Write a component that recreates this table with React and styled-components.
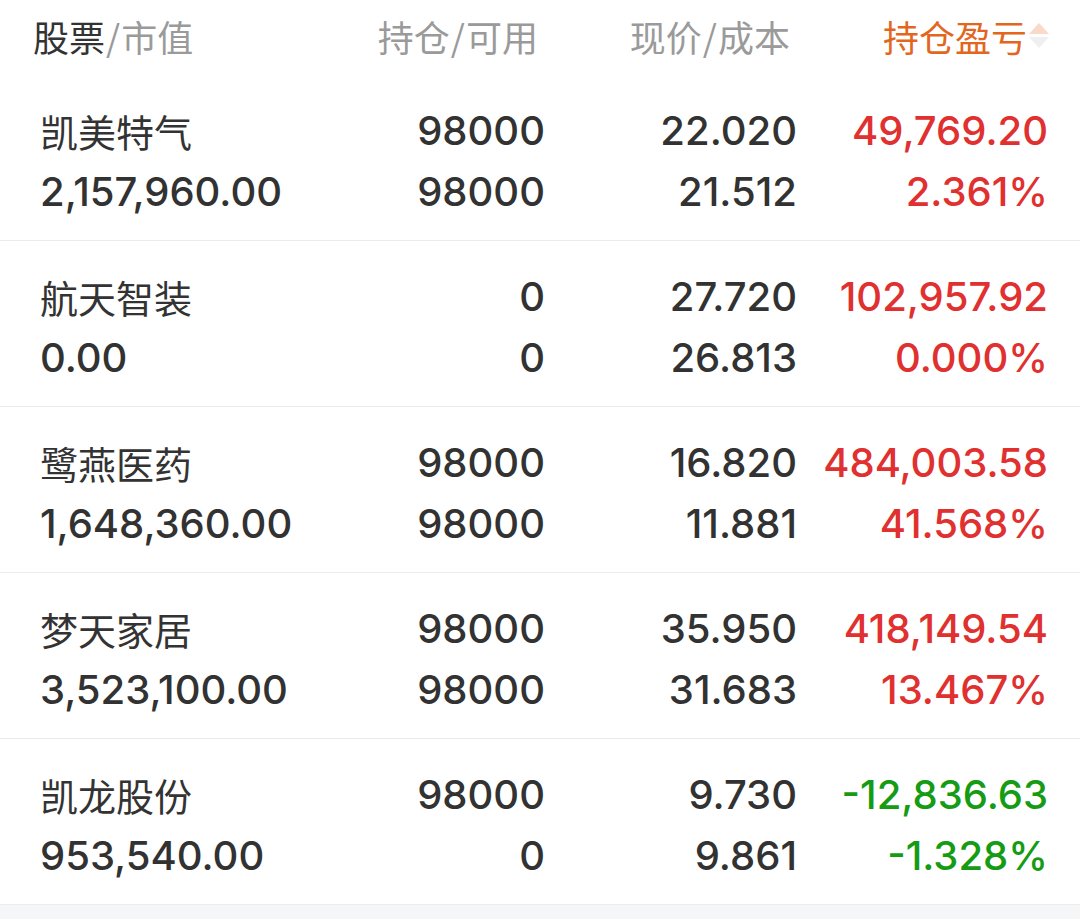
import React from 'react';
import styled, { createGlobalStyle } from 'styled-components';

const GlobalStyle = createGlobalStyle`
  html, body {
    margin: 0;
    padding: 0;
    background: #f5f6f8;
  }
  body {
    font-family: "Noto Sans CJK SC", sans-serif;
  }
`;

const Board = styled.div`
  background: #ffffff;
`;

const Grid = styled.div`
  display: grid;
  grid-template-columns: 260px 245px 252px 251px;
  padding: 0 32px 0 40px;
`;

const Header = styled(Grid)`
  height: 75px;
  box-sizing: border-box;
  padding: 0 28px 4px 33px;
  align-items: center;
  font-family: "Noto Sans CJK SC", sans-serif;
  font-size: 36px;
  line-height: 1;
`;

const HeadCell = styled.div`
  display: flex;
  align-items: center;
  justify-content: ${(p) => (p.$left ? 'flex-start' : 'flex-end')};
  color: #9a9a9a;
`;

const Strong = styled.span`
  color: ${(p) => (p.$active ? '#e2661d' : '#333333')};
`;

const Slash = styled.span`
  margin: 0 1px;
`;

const Sorter = styled.span`
  display: flex;
  flex-direction: column;
  gap: 3px;
  margin-left: 2px;
  margin-right: -8px;
`;

const Tri = styled.span`
  width: 0;
  height: 0;
  border-left: 10px solid transparent;
  border-right: 10px solid transparent;
  ${(p) =>
    p.$up
      ? 'border-bottom: 11px solid #fbd9c8;'
      : 'border-top: 11px solid #efefef;'}
`;

const Row = styled(Grid)`
  padding-top: 25px;
  padding-bottom: 18px;
  border-bottom: 1px solid #ececec;
`;

const Cell = styled.div`
  display: flex;
  flex-direction: column;
  align-items: ${(p) => (p.$left ? 'flex-start' : 'flex-end')};
`;

const Line = styled.div`
  height: 61px;
  line-height: 61px;
  white-space: nowrap;
  font-family: Inter, "Noto Sans CJK SC", sans-serif;
  font-weight: 500;
  font-size: 40px;
  color: ${(p) => p.$color || '#323232'};
`;

const Name = styled(Line)`
  font-family: "Noto Sans CJK SC", sans-serif;
  font-weight: 400;
  font-size: 38px;
  color: #333333;
`;

const RED = '#e0302f';
const GREEN = '#159b14';

const stocks = [
  { name: '凯美特气', value: '2,157,960.00', hold: '98000', avail: '98000', price: '22.020', cost: '21.512', pnl: '49,769.20', pct: '2.361%', up: true },
  { name: '航天智装', value: '0.00', hold: '0', avail: '0', price: '27.720', cost: '26.813', pnl: '102,957.92', pct: '0.000%', up: true },
  { name: '鹭燕医药', value: '1,648,360.00', hold: '98000', avail: '98000', price: '16.820', cost: '11.881', pnl: '484,003.58', pct: '41.568%', up: true },
  { name: '梦天家居', value: '3,523,100.00', hold: '98000', avail: '98000', price: '35.950', cost: '31.683', pnl: '418,149.54', pct: '13.467%', up: true },
  { name: '凯龙股份', value: '953,540.00', hold: '98000', avail: '0', price: '9.730', cost: '9.861', pnl: '-12,836.63', pct: '-1.328%', up: false },
];

export default function App() {
  return (
    <Board>
      <GlobalStyle />
      <Header>
        <HeadCell $left>
          <Strong>股票</Strong>
          <Slash>/</Slash>市值
        </HeadCell>
        <HeadCell>
          持仓<Slash>/</Slash>可用
        </HeadCell>
        <HeadCell>
          现价<Slash>/</Slash>成本
        </HeadCell>
        <HeadCell>
          <Strong $active>持仓盈亏</Strong>
          <Sorter>
            <Tri $up />
            <Tri />
          </Sorter>
        </HeadCell>
      </Header>
      {stocks.map((s) => (
        <Row key={s.name}>
          <Cell $left>
            <Name>{s.name}</Name>
            <Line>{s.value}</Line>
          </Cell>
          <Cell>
            <Line>{s.hold}</Line>
            <Line>{s.avail}</Line>
          </Cell>
          <Cell>
            <Line>{s.price}</Line>
            <Line>{s.cost}</Line>
          </Cell>
          <Cell>
            <Line $color={s.up ? RED : GREEN}>{s.pnl}</Line>
            <Line $color={s.up ? RED : GREEN}>{s.pct}</Line>
          </Cell>
        </Row>
      ))}
    </Board>
  );
}
